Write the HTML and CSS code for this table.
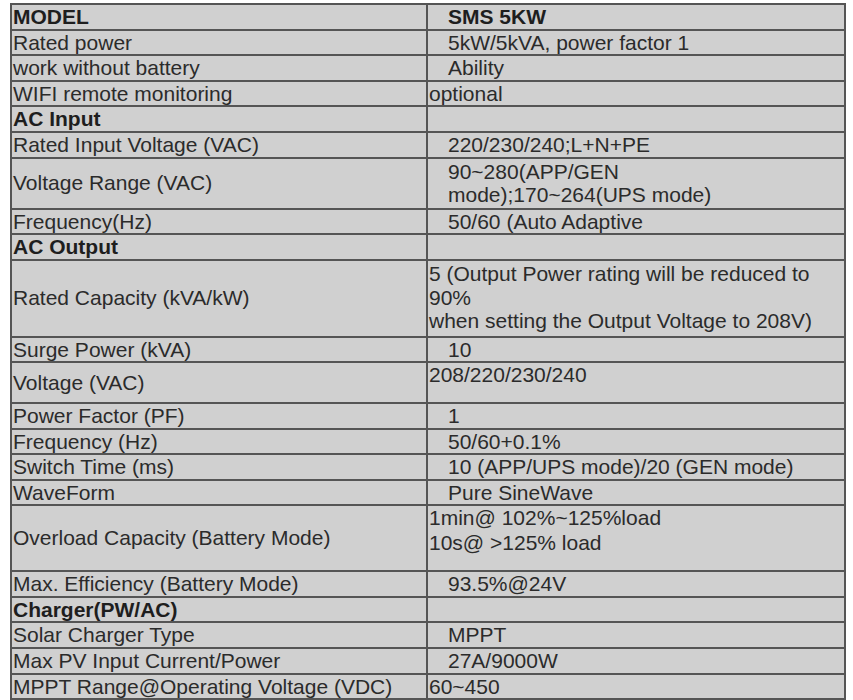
FILE: index.html
```html
<!DOCTYPE html>
<html>
<head>
<meta charset="utf-8">
<link rel="stylesheet" href="styles.css">
</head>
<body>
<table class="spec">
  <colgroup><col class="c1"><col class="c2"></colgroup>
  <tr><td class="b">MODEL</td><td class="b ind">SMS 5KW</td></tr>
  <tr><td>Rated power</td><td class="ind">5kW/5kVA, power factor 1</td></tr>
  <tr><td>work without battery</td><td class="ind">Ability</td></tr>
  <tr><td>WIFI remote monitoring</td><td>optional</td></tr>
  <tr><td class="b">AC Input</td><td></td></tr>
  <tr><td>Rated Input Voltage (VAC)</td><td class="ind">220/230/240;L+N+PE</td></tr>
  <tr class="two"><td>Voltage Range (VAC)</td><td class="ind">90~280(APP/GEN<br>mode);170~264(UPS mode)</td></tr>
  <tr><td>Frequency(Hz)</td><td class="ind">50/60 (Auto Adaptive</td></tr>
  <tr><td class="b">AC Output</td><td></td></tr>
  <tr class="three"><td>Rated Capacity (kVA/kW)</td><td>5 (Output Power rating will be reduced to<br>90%<br>when setting the Output Voltage to 208V)</td></tr>
  <tr><td>Surge Power (kVA)</td><td class="ind">10</td></tr>
  <tr class="tall"><td>Voltage (VAC)</td><td class="top">208/220/230/240</td></tr>
  <tr><td>Power Factor (PF)</td><td class="ind">1</td></tr>
  <tr><td>Frequency (Hz)</td><td class="ind">50/60+0.1%</td></tr>
  <tr><td>Switch Time (ms)</td><td class="ind">10 (APP/UPS mode)/20 (GEN mode)</td></tr>
  <tr><td>WaveForm</td><td class="ind">Pure SineWave</td></tr>
  <tr class="over"><td>Overload Capacity (Battery Mode)</td><td class="top">1min@ 102%~125%load<br>10s@ &gt;125% load</td></tr>
  <tr><td>Max. Efficiency (Battery Mode)</td><td class="ind">93.5%@24V</td></tr>
  <tr><td class="b">Charger(PW/AC)</td><td></td></tr>
  <tr><td>Solar Charger Type</td><td class="ind">MPPT</td></tr>
  <tr><td>Max PV Input Current/Power</td><td class="ind">27A/9000W</td></tr>
  <tr><td>MPPT Range@Operating Voltage (VDC)</td><td>60~450</td></tr>
</table>
</body>
</html>
```
FILE: styles.css
```css
html, body {
  margin: 0;
  padding: 0;
  background: #ffffff;
}
body {
  padding: 3px 0 0 10px;
  font-family: "Liberation Sans", Arial, sans-serif;
  font-size: 21px;
  color: #2b2b2b;
}
.spec {
  border-collapse: collapse;
  width: 834px;
  table-layout: fixed;
  background: #d0d0d0;
}
.c1 { width: 416px; }
.c2 { width: 418px; }
.spec td {
  border: 2px solid #555555;
  padding: 0 1px;
  line-height: 23.6px;
  vertical-align: middle;
  white-space: nowrap;
  overflow: hidden;
}
.spec td.b {
  font-weight: bold;
  color: #1e1e1e;
}
.spec td.ind {
  padding-left: 20px;
}
.spec .two td {
  padding-top: 1px;
  padding-bottom: 1px;
}
.spec .three td {
  padding-top: 1px;
  padding-bottom: 3px;
}
.spec td.top {
  vertical-align: top;
}
.spec .tall td.top {
  padding-bottom: 15px;
}
.spec .over td.top {
  line-height: 24.5px;
  padding-bottom: 15px;
}
```
